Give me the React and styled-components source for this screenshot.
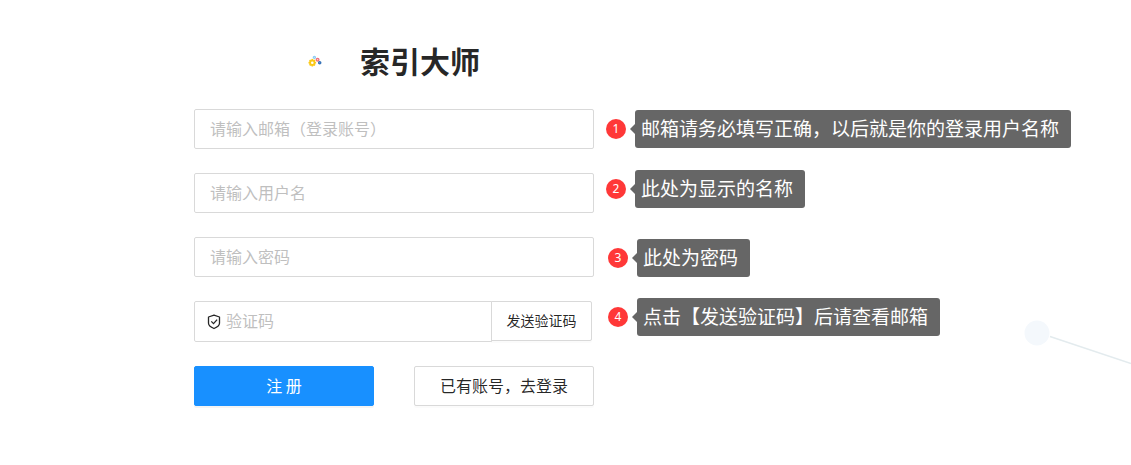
import React from 'react'
import styled, { createGlobalStyle } from 'styled-components'

const GlobalStyle = createGlobalStyle`
    * {
        box-sizing: border-box;
    }

    body {
        margin: 0;
        background: #fff;
        color: rgba(0, 0, 0, 0.85);
        font-family: "Noto Sans CJK SC", sans-serif;
        font-size: 16px;
    }

    button, input {
        font-family: inherit;
    }
`

const Page = styled.main`
    position: relative;
    overflow: hidden;
    padding: 38px 24px 59px 194px;
`

const Header = styled.header`
    display: flex;
    align-items: center;
    gap: 38px;
    height: 44px;
    margin-bottom: 27px;
    padding-left: 114px;

    h1 {
        margin: 0;
        font-size: 30px;
        line-height: 44px;
        font-weight: 700;
        white-space: nowrap;
    }
`

const Content = styled.div`
    display: flex;
    align-items: flex-start;
    gap: 12px;
`

const Form = styled.form`
    display: flex;
    flex-direction: column;
    flex: 0 0 400px;
    gap: 24px;
`

const TextInput = styled.input`
    width: 100%;
    height: 40px;
    padding: 0 15px 2px;
    border: 1px solid #d9d9d9;
    border-radius: 2px;
    background: #fff;
    color: inherit;
    font-size: 16px;
    outline: none;

    &::placeholder {
        color: #bfbfbf;
        opacity: 1;
    }

    &:focus {
        border-color: #40a9ff;
    }
`

const CodeRow = styled.div`
    display: flex;
    align-items: flex-start;
`

const CodeField = styled.label`
    display: flex;
    align-items: center;
    gap: 5px;
    width: 298px;
    height: 41px;
    padding: 0 12px;
    border: 1px solid #d9d9d9;
    border-radius: 2px 0 0 2px;

    svg {
        flex: none;
    }

    input {
        flex: 1;
        height: 36px;
        min-width: 0;
        padding: 0 0 4px;
        border: 0;
    }
`

const Button = styled.button`
    flex: 1;
    height: 40px;
    padding: 0 0 2px;
    border: 1px solid ${({ $primary }) => ($primary ? '#1890ff' : '#d9d9d9')};
    border-radius: 2px;
    background: ${({ $primary }) => ($primary ? '#1890ff' : '#fff')};
    color: ${({ $primary }) => ($primary ? '#fff' : 'inherit')};
    font-size: 16px;
    box-shadow: 0 2px 0 rgba(0, 0, 0, ${({ $primary }) => ($primary ? 0.045 : 0.015)});
    cursor: pointer;
`

const SendButton = styled(Button)`
    flex: 0 0 101px;
    margin-left: -1px;
    border-radius: 0 2px 2px 0;
    font-size: 14px;
`

const Actions = styled.div`
    display: flex;
    gap: 40px;
`

const Notes = styled.aside`
    display: flex;
    flex-direction: column;
    gap: 31px;
    padding-top: 1px;
`

const NoteGroup = styled.div`
    display: flex;
    flex-direction: column;
    gap: ${({ $indent }) => ($indent ? 21 : 22)}px;
    padding-left: ${({ $indent }) => ($indent ? 2 : 0)}px;
`

const NoteRow = styled.div`
    display: flex;
    align-items: center;
`

const Badge = styled.span`
    width: 20px;
    height: 20px;
    margin-right: 4px;
    border-radius: 50%;
    background: #ff3838;
    color: #fff;
    font-family: "Noto Sans", sans-serif;
    font-size: 12px;
    line-height: 20px;
    text-align: center;
`

const Arrow = styled.span`
    border: solid transparent;
    border-width: 5px 5px 5px 0;
    border-right-color: #666;
`

const Bubble = styled.p`
    height: 38px;
    margin: 0;
    padding: 0 12px 0 6px;
    border-radius: 3px;
    background: #666;
    color: #fff;
    font-size: 19px;
    line-height: 36px;
    white-space: nowrap;
`

const Backdrop = styled.svg`
    position: absolute;
    right: 0;
    bottom: 96px;
    pointer-events: none;
`

const teeth = [0, 45, 90, 135, 180, 225, 270, 315]

const Logo = () => (
    <svg width="14" height="14" viewBox="0 -1 14 14" aria-hidden="true">
        <circle cx="4.3" cy="8.7" r="2.2" fill="none" stroke="#fbc917" strokeWidth="1.8" />
        {teeth.map(angle => (
            <rect
                key={angle}
                x="3.5"
                y="4.9"
                width="1.6"
                height="1.5"
                fill="#fbc917"
                transform={`rotate(${angle} 4.3 8.7)`}
            />
        ))}
        <circle cx="6.4" cy="3.4" r="1.1" fill="#c9e9fb" stroke="#8dcdf4" strokeWidth="1.2" />
        <circle cx="9.6" cy="5.7" r="1.3" fill="#fbdcdf" stroke="#f0717a" strokeWidth="1.4" />
        <circle cx="11.7" cy="8.7" r="1.1" fill="#a9c6e6" stroke="#3974b9" strokeWidth="1.4" />
    </svg>
)

const ShieldIcon = () => (
    <svg width="14" height="16" viewBox="0 0 14 16" fill="none" stroke="#262626" aria-hidden="true">
        <path d="M7 1.2 12.5 3v6.2c0 2.2-2.3 3.9-5.5 5.3-3.2-1.4-5.5-3.1-5.5-5.3V3Z" strokeWidth="1.3" strokeLinejoin="round" />
        <path d="m4.3 7.4 2.2 2.2 3.6-4" strokeWidth="1.3" />
    </svg>
)

const Note = ({ number, children }) => (
    <NoteRow>
        <Badge>{number}</Badge>
        <Arrow />
        <Bubble>{children}</Bubble>
    </NoteRow>
)

const App = () => {
    return (
        <>
            <GlobalStyle />
            <Page>
                <Backdrop width="107" height="50" viewBox="0 0 107 50" aria-hidden="true">
                    <circle cx="13" cy="14" r="12.5" fill="#f4f8fc" />
                    <path d="M26 17.5 107 44.5" stroke="#e3ebee" strokeWidth="1.5" />
                </Backdrop>

                <Header>
                    <Logo />
                    <h1>索引大师</h1>
                </Header>

                <Content>
                    <Form onSubmit={e => e.preventDefault()}>
                        <TextInput type="email" aria-label="邮箱" placeholder="请输入邮箱（登录账号）" />
                        <TextInput type="text" aria-label="用户名" placeholder="请输入用户名" />
                        <TextInput type="password" aria-label="密码" placeholder="请输入密码" />
                        <CodeRow>
                            <CodeField>
                                <ShieldIcon />
                                <TextInput type="text" aria-label="验证码" placeholder="验证码" />
                            </CodeField>
                            <SendButton type="button">发送验证码</SendButton>
                        </CodeRow>
                        <Actions>
                            <Button type="submit" $primary>注 册</Button>
                            <Button type="button">已有账号，去登录</Button>
                        </Actions>
                    </Form>

                    <Notes>
                        <NoteGroup>
                            <Note number={1}>邮箱请务必填写正确，以后就是你的登录用户名称</Note>
                            <Note number={2}>此处为显示的名称</Note>
                        </NoteGroup>
                        <NoteGroup $indent>
                            <Note number={3}>此处为密码</Note>
                            <Note number={4}>点击【发送验证码】后请查看邮箱</Note>
                        </NoteGroup>
                    </Notes>
                </Content>
            </Page>
        </>
    )
}

export default App
